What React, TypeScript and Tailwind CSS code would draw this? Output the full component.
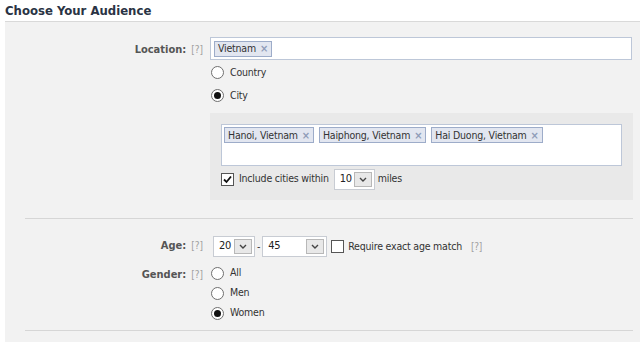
import React from 'react';

const font = { fontFamily: '"DejaVu Sans Condensed", Tahoma, "DejaVu Sans", sans-serif' };

const Help = () => <span className="ml-[5px] text-[10px] font-normal text-[#a0a0a0]">[?]</span>;

const Label = ({ text, top = 0 }: { text: string; top?: number }) => (
  <div className="w-[198px] shrink-0 text-right text-[11px] font-bold text-[#555]" style={{ paddingTop: top }}>
    {text}
    <Help />
  </div>
);

const Token = ({ text }: { text: string }) => (
  <span className="flex h-[16px] items-center gap-[4px] border border-[#9dacc9] bg-[#e2e6f0] px-[3px] text-[10.5px] leading-none tracking-[-0.2px] text-[#333]">
    {text}
    <span className="text-[11px] font-bold text-[#8f9cb8]">×</span>
  </span>
);

const Radio = ({ checked, label }: { checked?: boolean; label: string }) => (
  <div className="flex items-center gap-[6px] text-[10.5px] tracking-[-0.2px] text-[#333]">
    <span className="flex h-[13px] w-[13px] items-center justify-center rounded-full border border-[#6f6f6f] bg-white">
      {checked && <span className="h-[7px] w-[7px] rounded-full bg-[#111]" />}
    </span>
    {label}
  </div>
);

const Check = ({ checked }: { checked?: boolean }) => (
  <span className="flex h-[13px] w-[13px] items-center justify-center border border-[#555] bg-white">
    {checked && (
      <svg width="9" height="9" viewBox="0 0 9 9">
        <path d="M1 4.5 L3.5 7 L8 1.5" fill="none" stroke="#111" strokeWidth="1.8" />
      </svg>
    )}
  </span>
);

const Select = ({ value, width }: { value: string; width: number }) => (
  <span
    className="flex h-[21px] items-center justify-between border border-[#c8ccd3] bg-white pl-[5px] pr-[2px] text-[11px] text-[#222]"
    style={{ width }}
  >
    {value}
    <span className="flex h-[15px] w-[18px] items-center justify-center border border-[#b8b8b8] bg-[#e8e8e8]">
      <svg width="8" height="5" viewBox="0 0 8 5">
        <path d="M1 1 L4 4 L7 1" fill="none" stroke="#444" strokeWidth="1.4" />
      </svg>
    </span>
  </span>
);

export default function App() {
  return (
    <div className="h-[342px] w-[640px] overflow-hidden bg-white" style={font}>
      <div className="flex h-[21px] items-center pl-[5px] text-[13px] font-bold text-[#2a3344]">Choose Your Audience</div>
      <div className="ml-[5px] h-[321px] border-t border-[#d9d9d9] bg-[#f2f2f2] pt-[15px]">
        {/* Location */}
        <div className="flex">
          <Label text="Location:" top={5} />
          <div className="ml-[7px] mr-[8px] flex-1">
            <div className="flex h-[23px] items-center border border-[#bdc7d8] bg-white pl-[3px]">
              <Token text="Vietnam" />
            </div>
            <div className="mt-[1px]">
              <div className="flex h-[23px] items-center pl-[1px]">
                <Radio label="Country" />
              </div>
              <div className="flex h-[23px] items-center pl-[1px]">
                <Radio checked label="City" />
              </div>
            </div>
            <div className="mt-[6px] mr-[-1px] bg-[#e9e9e9] px-[11px] pt-[11px] pb-[11px]">
              <div className="flex h-[42px] items-start gap-[5px] border border-[#bdc7d8] bg-white pl-[2px] pt-[2px]">
                <Token text="Hanoi, Vietnam" />
                <Token text="Haiphong, Vietnam" />
                <Token text="Hai Duong, Vietnam" />
              </div>
              <div className="mt-[3px] flex h-[20px] items-center text-[10.5px] tracking-[-0.2px] text-[#333]">
                <Check checked />
                <span className="ml-[5px]">Include cities within</span>
                <span className="ml-[5px]">
                  <Select value="10" width={41} />
                </span>
                <span className="ml-[3px]">miles</span>
              </div>
            </div>
          </div>
        </div>

        <div className="ml-[20px] mr-[7px] mt-[18px] border-t border-[#d6d6d6]" />

        {/* Age */}
        <div className="mt-[17px] flex items-center">
          <Label text="Age:" />
          <div className="ml-[10px] flex items-center text-[10.5px] tracking-[-0.2px] text-[#333]">
            <Select value="20" width={42} />
            <span className="mx-[2px]">-</span>
            <Select value="45" width={65} />
            <span className="ml-[4px]">
              <Check />
            </span>
            <span className="ml-[4px]">Require exact age match</span>
            <span className="ml-[4px]">
              <Help />
            </span>
          </div>
        </div>

        {/* Gender */}
        <div className="mt-[6px] flex">
          <Label text="Gender:" top={4} />
          <div className="ml-[8px]">
            <div className="flex h-[20px] items-center"><Radio label="All" /></div>
            <div className="flex h-[20px] items-center"><Radio label="Men" /></div>
            <div className="flex h-[20px] items-center"><Radio checked label="Women" /></div>
          </div>
        </div>

        <div className="ml-[20px] mr-[7px] mt-[7px] border-t border-[#d6d6d6]" />
      </div>
    </div>
  );
}
